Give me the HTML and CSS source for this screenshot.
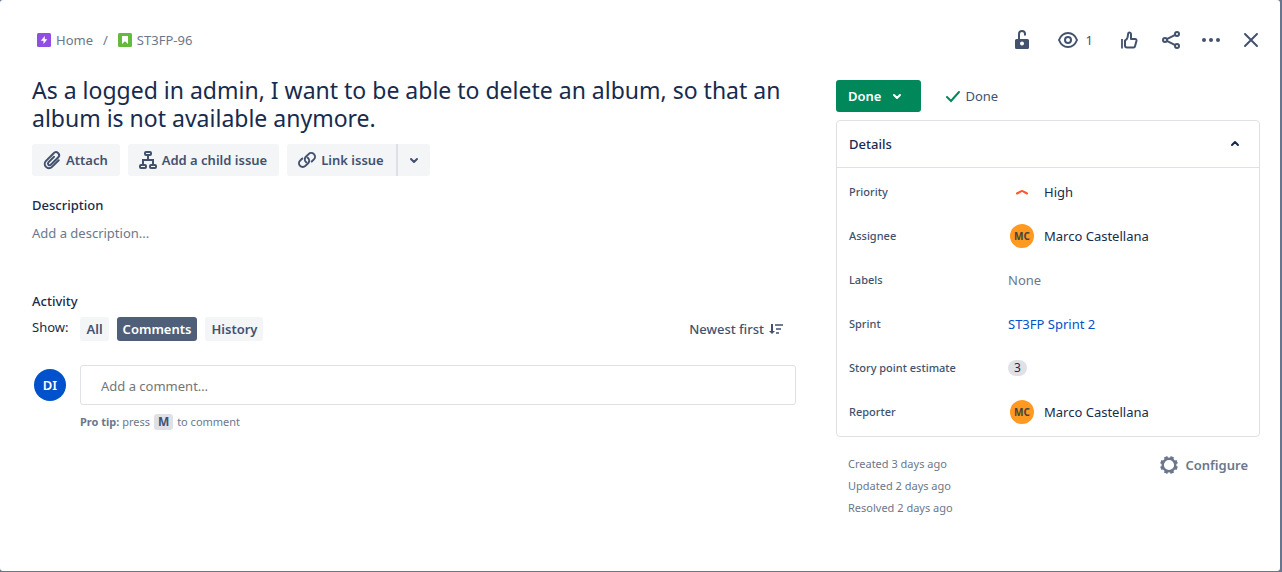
FILE: index.html
```html
<!DOCTYPE html>
<html lang="en">
<head>
<meta charset="utf-8">
<meta name="viewport" content="width=device-width, initial-scale=1">
<title>ST3FP-96</title>
<link rel="stylesheet" href="styles.css">
</head>
<body>
<main class="dialog">
  <header class="topbar">
    <nav class="crumbs" aria-label="Breadcrumb">
      <a href="#" class="crumb"><svg class="type" viewBox="0 0 14 14" width="14" height="14"><rect width="14" height="14" rx="1.5" fill="#904ee2"/><path d="M7.800 3v3.200h2.500L6.500 11V7.800H3.800z" fill="#fff"/></svg>Home</a>
      <span class="slash">/</span>
      <a href="#" class="crumb key"><svg class="type" viewBox="0 0 14 14" width="14" height="14"><rect width="14" height="14" rx="1.5" fill="#63ba3c"/><path d="M4 3h6v8L7 8.200 4 11z" fill="#fff"/></svg>ST3FP-96</a>
    </nav>
    <div class="actions">
      <button class="icon-btn lock" aria-label="Restrictions"><svg viewBox="0 0 24 24" width="24" height="24"><path fill="currentColor" fill-rule="evenodd" d="M6.500 11h11a1.500 1.500 0 0 1 1.500 1.500v7a1.500 1.500 0 0 1-1.500 1.500h-11A1.500 1.500 0 0 1 5 19.500v-7A1.500 1.500 0 0 1 6.500 11zM12 13.500a2 2 0 1 0 0 4 2 2 0 0 0 0-4z"/><path d="M9 11.500V6a3 3 0 0 1 6 0v1.500" fill="none" stroke="currentColor" stroke-width="2"/></svg></button>
      <button class="icon-btn watch" aria-label="Watchers"><svg viewBox="0 0 24 24" width="24" height="24" fill="none" stroke="currentColor" stroke-width="2"><path d="M3 12c1.600-4 4.800-7 9-7s7.400 3 9 7c-1.600 4-4.800 7-9 7s-7.400-3-9-7z"/><circle cx="12" cy="12" r="3"/></svg><span>1</span></button>
      <button class="icon-btn like" aria-label="Vote"><svg viewBox="0 0 24 24" width="24" height="24" fill="none" stroke="currentColor" stroke-width="2" stroke-linejoin="round"><path d="M5 11v9.500" stroke-width="1.800"/><path d="M8 12.500V17.500A2 2 0 0 0 10 19.500H16.500A1.500 1.500 0 0 0 18 18.300L19.500 12.700A1.400 1.400 0 0 0 18.200 11H14V6A1.500 1.500 0 0 0 11.300 5.200L10.600 9.200Q10.200 11 8 12.500z"/></svg></button>
      <button class="icon-btn" aria-label="Share"><svg viewBox="0 0 24 24" width="24" height="24" fill="none" stroke="currentColor" stroke-width="2"><circle cx="6" cy="12" r="2"/><circle cx="18" cy="6" r="2"/><circle cx="18" cy="18" r="2"/><path d="M7.800 11.100l8.400-4.200M7.800 12.900l8.400 4.200"/></svg></button>
      <button class="icon-btn" aria-label="More actions"><svg viewBox="0 0 24 24" width="24" height="24" fill="currentColor"><circle cx="5" cy="12" r="2"/><circle cx="12" cy="12" r="2"/><circle cx="19" cy="12" r="2"/></svg></button>
      <button class="icon-btn" aria-label="Close"><svg viewBox="0 0 24 24" width="24" height="24" fill="none" stroke="currentColor" stroke-width="2" stroke-linecap="round"><path d="M6 6l12 12M18 6L6 18"/></svg></button>
    </div>
  </header>

  <div class="columns">
    <section class="content">
      <h1>As a logged in admin, I want to be able to delete an album, so that an album is not available anymore.</h1>
      <div class="toolbar">
        <button class="btn"><svg viewBox="0 0 24 24" width="24" height="24" fill="none" stroke="currentColor" stroke-width="2" stroke-linecap="round"><path d="M18.700 12.200L12 18.900a4.200 4.200 0 0 1-6-6L13.700 5.200a2.900 2.900 0 0 1 4.600 4.100L10.800 16.800a1.700 1.700 0 0 1-2.400-2.400L14 8.800"/></svg>Attach</button>
        <button class="btn"><svg viewBox="0 0 24 24" width="24" height="24" fill="none" stroke="currentColor" stroke-width="2"><rect x="9" y="4" width="6" height="3" rx="1"/><rect x="4" y="17" width="6" height="3" rx="1"/><rect x="14" y="17" width="6" height="3" rx="1"/><path d="M12 7v5M7 17v-5h10v5"/></svg>Add a child issue</button>
        <div class="split">
          <button class="btn"><svg viewBox="0 0 24 24" width="24" height="24" fill="none" stroke="currentColor" stroke-width="2" stroke-linecap="round"><path d="M11.200 14.200a3.700 3.700 0 0 1-.500-5.200l2.900-2.900a3.700 3.700 0 0 1 5.300 5.300L16.700 13.500"/><path d="M12.800 9.800a3.700 3.700 0 0 1 .500 5.200l-2.900 2.900a3.700 3.700 0 0 1-5.300-5.300L7.300 10.500"/></svg>Link issue</button>
          <button class="btn more" aria-label="More link options"><svg viewBox="0 0 24 24" width="24" height="24" fill="none" stroke="currentColor" stroke-width="2" stroke-linecap="round" stroke-linejoin="round"><path d="M9 11l3 3 3-3"/></svg></button>
        </div>
      </div>

      <h2>Description</h2>
      <p class="hint">Add a description...</p>

      <h2 class="activity">Activity</h2>
      <div class="filters">
        <span class="show">Show:</span>
        <button class="chip">All</button>
        <button class="chip active">Comments</button>
        <button class="chip">History</button>
        <button class="sort">Newest first<svg viewBox="0 0 16 16" width="16" height="16" fill="none" stroke="currentColor" stroke-width="2"><path d="M4 3v9"/><path d="M1 10h6l-3 3z" fill="currentColor" stroke="none"/><path d="M7 4h8M8 8h5M8 12h3" stroke-width="1.600"/></svg></button>
      </div>
      <div class="comment">
        <span class="avatar me">DI</span>
        <div class="comment-body">
          <input type="text" placeholder="Add a comment…" aria-label="Add a comment">
          <p class="tip"><strong>Pro tip:</strong> press <kbd>M</kbd> to comment</p>
        </div>
      </div>
    </section>

    <aside class="side">
      <div class="status">
        <button class="done">Done<svg viewBox="0 0 24 24" width="24" height="24" fill="none" stroke="currentColor" stroke-width="2" stroke-linecap="round" stroke-linejoin="round"><path d="M9 11l3 3 3-3"/></svg></button>
        <span class="resolution"><svg viewBox="0 0 16 16" width="16" height="16" fill="none" stroke="#00875a" stroke-width="2" stroke-linecap="round"><path d="M2 9l4 4 8-9"/></svg>Done</span>
      </div>
      <div class="panel">
        <button class="panel-head" aria-expanded="true">Details<svg viewBox="0 0 24 24" width="24" height="24" fill="none" stroke="currentColor" stroke-width="2" stroke-linecap="round" stroke-linejoin="round"><path d="M9 13l3-3 3 3"/></svg></button>
        <dl class="fields">
          <dt>Priority</dt>
          <dd><span class="mark"><svg viewBox="0 0 16 16" width="16" height="16" fill="none" stroke="#ff5630" stroke-width="2" stroke-linecap="round" stroke-linejoin="round"><path d="M3 9.500L7.300 7.200Q8 6.800 8.700 7.200L13 9.500"/></svg></span>High</dd>
          <dt>Assignee</dt>
          <dd><span class="mark"><span class="avatar user">MC</span></span>Marco Castellana</dd>
          <dt>Labels</dt>
          <dd class="muted">None</dd>
          <dt>Sprint</dt>
          <dd><a href="#">ST3FP Sprint 2</a></dd>
          <dt>Story point estimate</dt>
          <dd><span class="badge">3</span></dd>
          <dt>Reporter</dt>
          <dd><span class="mark"><span class="avatar user">MC</span></span>Marco Castellana</dd>
        </dl>
      </div>
      <footer class="meta">
        <div>
          <p>Created 3 days ago</p>
          <p>Updated 2 days ago</p>
          <p>Resolved 2 days ago</p>
        </div>
        <button class="configure"><svg viewBox="0 0 24 24" width="24" height="24" fill="none" stroke="currentColor"><circle cx="12" cy="12" r="6.300" stroke-width="2.400"/><path stroke-width="3.600" d="M14.500 6l.900-2.200M18 9.500l2.200-.900M18 14.500l2.200.900M14.500 18l.900 2.200M9.500 18l-.900 2.200M6 14.500l-2.200.900M6 9.500l-2.200-.900M9.500 6l-.900-2.200"/></svg>Configure</button>
      </footer>
    </aside>
  </div>
</main>
</body>
</html>
```
FILE: styles.css
```css
* {
  box-sizing: border-box;
}

body {
  display: flex;
  min-height: 100vh;
  margin: 0;
  padding: 0 2px 1px 0;
  background: #67758f;
  color: #172b4d;
  font: 13px/20px "Segoe UI", "Noto Sans", sans-serif;
}

h1, h2, p, dl, dd {
  margin: 0;
}

button {
  display: flex;
  align-items: center;
  margin: 0;
  padding: 0;
  border: 0;
  background: none;
  color: #42526e;
  font: inherit;
  font-weight: 600;
  white-space: nowrap;
  cursor: pointer;
}

svg {
  flex: none;
}

a {
  color: #0052cc;
  text-decoration: none;
}

.dialog {
  flex: 1;
  min-width: 0;
  border-radius: 3px;
  background: #fff;
}

.topbar {
  display: flex;
  align-items: center;
  justify-content: space-between;
  padding: 24px 13px 20px 37px;
}

.crumbs {
  display: flex;
  align-items: center;
  gap: 10px;
}

.crumb, .slash {
  color: #6b778c;
}

.crumb {
  display: flex;
  align-items: center;
  gap: 5px;
}

.actions {
  display: flex;
  gap: 8px;
}

.icon-btn {
  justify-content: center;
  min-width: 32px;
  height: 32px;
}

.lock {
  margin-right: 6px;
}

.watch {
  gap: 6px;
  padding: 0 12px 0 4px;
  font-weight: 400;
}

.like {
  margin-right: 2px;
}

.columns {
  display: grid;
  grid-template-columns: minmax(0, 1fr) 424px;
  gap: 40px;
  padding: 0 20px 40px 32px;
}

h1 {
  font-size: 23px;
  line-height: 28px;
  font-weight: 400;
}

.toolbar {
  display: flex;
  gap: 8px;
  margin: 12px 0 19px;
}

.btn {
  gap: 2px;
  height: 32px;
  padding: 0 12px 0 8px;
  border-radius: 3px;
  background: #f4f5f7;
}

.split {
  display: flex;
}

.split .btn:first-child {
  border-radius: 3px 0 0 3px;
}

.split .more {
  padding: 0 4px;
  border-left: 2px solid #dfe1e6;
  border-radius: 0 3px 3px 0;
}

h2 {
  font-size: 13px;
  line-height: 20px;
  font-weight: 500;
}

.hint {
  margin-top: 8px;
  color: #6b778c;
}

.activity {
  margin-top: 48px;
}

.filters {
  display: flex;
  align-items: center;
  gap: 8px;
  margin-top: 6px;
}

.show {
  margin-right: 4px;
  padding-bottom: 4px;
}

.chip {
  height: 24px;
  padding: 0 6px;
  border-radius: 3px;
  background: #f4f5f7;
}

.chip.active {
  background: #505f79;
  color: #fff;
}

.sort {
  gap: 4px;
  margin-left: auto;
  margin-right: 12px;
  font-weight: 500;
}

.comment {
  display: flex;
  gap: 14px;
  margin-top: 24px;
  padding-left: 2px;
}

.avatar {
  display: flex;
  flex: none;
  align-items: center;
  justify-content: center;
  border-radius: 50%;
}

.me {
  width: 32px;
  height: 32px;
  margin-top: 4px;
  background: #0052cc;
  color: #fff;
  font-weight: 600;
}

.comment-body {
  flex: 1;
}

input {
  width: 100%;
  height: 40px;
  padding: 2px 20px 0;
  border: 1px solid #dfe1e6;
  border-radius: 3px;
  background: #fff;
  color: #172b4d;
  font: inherit;
}

input::placeholder {
  color: #757575;
  opacity: 1;
}

.tip {
  margin-top: 7px;
  color: #6b778c;
  font-size: 11px;
}

kbd {
  display: inline-block;
  margin: 0 1px;
  padding: 0 4px;
  border-radius: 3px;
  background: #dfe1e6;
  color: #42526e;
  font: bold 12px/16px "Segoe UI", "Noto Sans", sans-serif;
}

.side {
  padding-top: 4px;
}

.status {
  display: flex;
  align-items: center;
  gap: 24px;
}

.done {
  gap: 4px;
  height: 32px;
  padding: 0 12px;
  border-radius: 3px;
  background: #00875a;
  color: #fff;
}

.resolution {
  display: flex;
  align-items: center;
  gap: 4px;
  color: #42526e;
}

.panel {
  margin-top: 8px;
  border: 1px solid #dfe1e6;
  border-radius: 4px;
}

.panel-head {
  justify-content: space-between;
  width: 100%;
  height: 47px;
  padding: 0 12px;
  border-bottom: 1px solid #dfe1e6;
  color: #172b4d;
  font-weight: 500;
}

.fields {
  display: grid;
  grid-template-columns: 159px minmax(0, 1fr);
  grid-auto-rows: 44px;
  align-items: center;
  padding: 2px 12px;
}

dt {
  color: #42526e;
  font-size: 11px;
  font-weight: 500;
}

dd {
  display: flex;
  align-items: center;
}

.mark {
  display: flex;
  justify-content: center;
  width: 28px;
  margin-right: 8px;
}

.user {
  width: 24px;
  height: 24px;
  background: #ff991f;
  color: #42433f;
  font-size: 10px;
  font-weight: 700;
}

.muted {
  color: #6b778c;
}

.badge {
  padding: 0 6px;
  border-radius: 8px;
  background: #dfe1e6;
  font-size: 12px;
  line-height: 16px;
}

.meta {
  display: flex;
  align-items: flex-start;
  justify-content: space-between;
  padding: 16px 12px 0;
  color: #6b778c;
  font-size: 11px;
  line-height: 22px;
}

.configure {
  gap: 4px;
  color: #6b778c;
  font-size: 13px;
}
```
